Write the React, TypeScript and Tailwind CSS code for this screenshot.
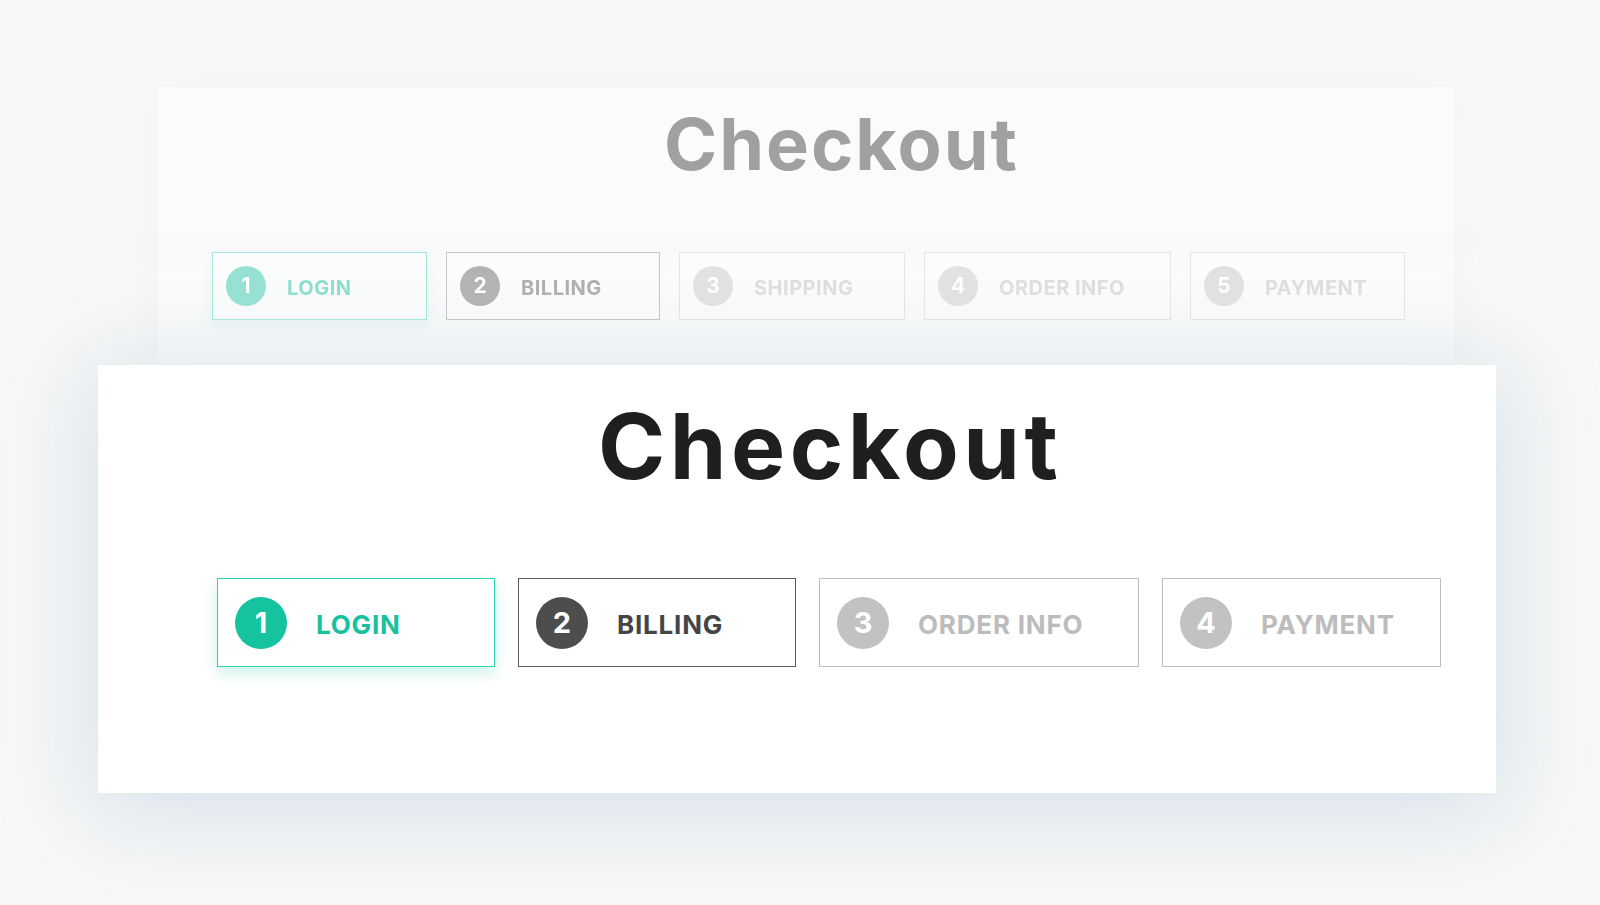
type Step = {
  n: number;
  label: string;
  width: string;
  box: string;
  circle: string;
  text: string;
};

const backSteps: Step[] = [
  { n: 1, label: 'LOGIN', width: 'w-[215px]', box: 'border-[#a3e8dc] shadow-[0_6px_12px_rgba(60,200,175,0.10)]', circle: 'bg-[#95e2d4]', text: 'text-[#8cdfcf]' },
  { n: 2, label: 'BILLING', width: 'w-[214px]', box: 'border-[#c6c6c6]', circle: 'bg-[#b3b3b3]', text: 'text-[#afafaf]' },
  { n: 3, label: 'SHIPPING', width: 'w-[226px]', box: 'border-[#e6e6e6]', circle: 'bg-[#e2e2e2]', text: 'text-[#dfdfdf]' },
  { n: 4, label: 'ORDER INFO', width: 'w-[247px]', box: 'border-[#e6e6e6]', circle: 'bg-[#e2e2e2]', text: 'text-[#dfdfdf]' },
  { n: 5, label: 'PAYMENT', width: 'w-[215px]', box: 'border-[#e6e6e6]', circle: 'bg-[#e2e2e2]', text: 'text-[#dfdfdf]' },
];

const frontSteps: Step[] = [
  { n: 1, label: 'LOGIN', width: 'w-[278px]', box: 'border-[#2cd2b4] shadow-[0_6px_14px_rgba(23,195,160,0.22)]', circle: 'bg-[#15c39f]', text: 'text-[#16c19d]' },
  { n: 2, label: 'BILLING', width: 'w-[278px]', box: 'border-[#5c5c5c]', circle: 'bg-[#4d4d4d]', text: 'text-[#454545]' },
  { n: 3, label: 'ORDER INFO', width: 'w-[320px]', box: 'border-[#bdbdbd]', circle: 'bg-[#c2c2c2]', text: 'text-[#bcbcbc]' },
  { n: 4, label: 'PAYMENT', width: 'w-[279px]', box: 'border-[#bdbdbd]', circle: 'bg-[#c2c2c2]', text: 'text-[#bcbcbc]' },
];

const font = { fontFamily: 'Inter, "Open Sans", sans-serif' };

const BackStep = ({ s }: { s: Step }) => (
  <div className={`${s.width} h-[68px] border bg-[#fcfcfc] flex items-center pl-[13px] gap-[21px] ${s.box}`}>
    <div className={`w-[40px] h-[40px] rounded-full flex items-center justify-center text-white text-[21px] font-bold ${s.circle}`}>
      {s.n}
    </div>
    <span className={`text-[20px] font-bold tracking-[0.5px] pt-[3px] ${s.text}`}>{s.label}</span>
  </div>
);

const FrontStep = ({ s }: { s: Step }) => (
  <div className={`${s.width} h-[89px] border-[1.5px] bg-white flex items-center pl-[17px] gap-[29px] ${s.box}`}>
    <div className={`w-[52px] h-[52px] rounded-full flex items-center justify-center text-white text-[29px] font-bold ${s.circle}`}>
      {s.n}
    </div>
    <span className={`text-[26px] font-bold tracking-[0.8px] pt-[3px] ${s.text}`}>{s.label}</span>
  </div>
);

export default function App() {
  return (
    <div className="w-[1600px] h-[905px] overflow-hidden bg-[#f8f8f8]" style={font}>
      {/* faded card behind */}
      <div className="ml-[158px] mt-[87px] w-[1296px] h-[278px] bg-[#fbfbfb] shadow-[0_0_40px_rgba(0,0,0,0.025)] blur-[0.5px]">
        <h1 className="pl-[506px] pt-[21px] text-[72px] leading-none font-bold text-[#a0a0a0] tracking-[2px]">
          Checkout
        </h1>
        <div className="mt-[72px] ml-[54px] flex gap-[19px]">
          {backSteps.map((s) => (
            <BackStep key={s.n} s={s} />
          ))}
        </div>
      </div>

      {/* main card */}
      <div className="ml-[98px] w-[1398px] h-[428px] bg-white shadow-[0_12px_90px_14px_rgba(190,210,222,0.55)] relative">
        <h1 className="pl-[500px] pt-[36px] text-[91px] leading-none font-bold text-[#1f1f1f] tracking-[4.5px]">
          Checkout
        </h1>
        <div className="mt-[86px] ml-[119px] flex gap-[23px]">
          {frontSteps.map((s) => (
            <FrontStep key={s.n} s={s} />
          ))}
        </div>
      </div>
    </div>
  );
}
